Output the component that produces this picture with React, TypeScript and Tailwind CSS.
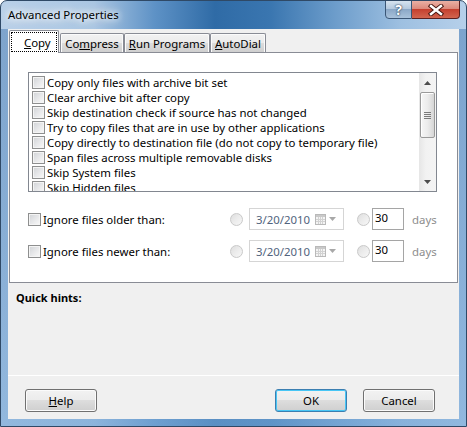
import React from "react";

const font = { fontFamily: '"Segoe UI", "Noto Sans", "Open Sans", sans-serif' };

function CheckBox() {
  return (
    <span className="w-[13px] h-[13px] shrink-0 flex border border-[#8e8f8f] bg-[#f4f4f4] p-[1px]">
      <span className="flex-1 bg-[linear-gradient(135deg,#d4d6d9_0%,#e6e7e9_50%,#f6f6f6_100%)]" />
    </span>
  );
}

function Radio() {
  return (
    <span className="block w-[13px] h-[13px] shrink-0 rounded-full border border-[#c9c9c9] bg-[linear-gradient(135deg,#dedede_0%,#ececec_50%,#f7f7f7_100%)]" />
  );
}

function Tab({ children, w }: { children: React.ReactNode; w: string }) {
  return (
    <div
      className={`${w} h-[19px] shrink-0 flex items-center justify-center border border-b-0 border-[#898c95] rounded-t-[2px] bg-[linear-gradient(180deg,#f2f2f2_0%,#ebebeb_50%,#dddddd_50%,#cfcfcf_100%)] shadow-[inset_1px_1px_0_#fbfbfb,inset_-1px_0_0_#fbfbfb] leading-[15px]`}
    >
      {children}
    </div>
  );
}

function Btn({ children, def }: { children: React.ReactNode; def?: boolean }) {
  return (
    <div
      className={`w-[72px] h-[23px] rounded-[3px] border flex items-center justify-center leading-[15px] bg-[linear-gradient(180deg,#f2f2f2_0%,#ebebeb_50%,#dddddd_50%,#cfcfcf_100%)] ${
        def
          ? "border-[#3c7fb1] shadow-[inset_0_0_0_1px_#48c6f5]"
          : "border-[#707070] shadow-[inset_0_0_0_1px_#fbfbfb]"
      }`}
    >
      {children}
    </div>
  );
}

function DateBox() {
  return (
    <div className="w-[95px] h-[22px] border border-[#d5d5d5] bg-white flex items-center pl-[6px] pr-[7px] shrink-0">
      <span className="text-[#51637d] leading-[15px]">3/20/2010</span>
      <svg width="11" height="11" viewBox="0 0 11 11" className="ml-auto">
        <rect x="0.5" y="0.5" width="10" height="10" fill="#f4f4f4" stroke="#b9b9b9" />
        <rect x="1" y="1" width="9" height="2" fill="#c9c9c9" />
        <path d="M1 5.5H10M1 7.5H10M3.5 3V10M5.5 3V10M7.5 3V10" stroke="#d2d2d2" strokeWidth="1" />
      </svg>
      <svg width="7" height="4" viewBox="0 0 7 4" className="ml-[3px]">
        <path d="M0 0H7L3.5 4Z" fill="#a8a8a8" />
      </svg>
    </div>
  );
}

function IgnoreRow({ label }: { label: string }) {
  return (
    <div className="h-[22px] flex items-center pl-[18px]">
      <div className="w-[202px] flex items-center shrink-0">
        <CheckBox />
        <span className="ml-[2px] leading-[15px]">{label}</span>
      </div>
      <Radio />
      <div className="ml-[6px]">
        <DateBox />
      </div>
      <div className="ml-[13px]">
        <Radio />
      </div>
      <div className="ml-[2px] w-[32px] h-[22px] border border-[#a5a5a5] bg-white pl-[2px] pt-[1px] leading-[15px] shrink-0">
        30
      </div>
      <span className="ml-[8px] text-[#8d8d8d] leading-[15px]">days</span>
    </div>
  );
}

const items = [
  "Copy only files with archive bit set",
  "Clear archive bit after copy",
  "Skip destination check if source has not changed",
  "Try to copy files that are in use by other applications",
  "Copy directly to destination file (do not copy to temporary file)",
  "Span files across multiple removable disks",
  "Skip System files",
  "Skip Hidden files",
];

export default function App() {
  return (
    <div
      className="w-[467px] h-[427px] flex flex-col overflow-hidden rounded-t-[7px] border border-[#2f4966] text-[11.4px] text-black bg-[linear-gradient(180deg,transparent_0px,transparent_28px,rgba(78,128,182,0.55)_28px,rgba(120,168,215,0.6)_100%),linear-gradient(90deg,#b9d0e8_0%,#aac6e2_20%,#5e92c6_33%,#2f6ba6_46%,#3a76b0_58%,#6d9dcb_72%,#9ec0e1_86%,#b6d0ea_100%)]"
      style={font}
    >
      {/* title bar */}
      <div className="h-[28px] shrink-0 flex items-start">
        <div className="pl-[7px] pt-[6px] leading-[16px] [text-shadow:0_0_6px_#fff,0_0_10px_#fff,0_0_14px_#fff]">
          Advanced Properties
        </div>
        <div className="ml-auto mr-[6px] flex h-[18px] -mt-[1px]">
          <div className="w-[27px] h-[19px] border border-[#3a5676] rounded-bl-[4px] bg-[linear-gradient(180deg,#d6e3ef_0%,#b5c9de_45%,#8ba8c7_50%,#a9c2db_100%)] flex items-center justify-center text-white font-bold text-[14px] leading-[14px] [text-shadow:0_0_2px_#1d3550,0_0_1px_#1d3550]">
            ?
          </div>
          <div className="w-[48px] h-[19px] border border-l-0 border-[#5b2020] rounded-br-[4px] bg-[linear-gradient(180deg,#eab0a4_0%,#dc8a7c_45%,#c5402f_50%,#d2654f_100%)] flex items-center justify-center">
            <svg width="16" height="12" viewBox="0 0 16 12">
              <path d="M3 2L13 10M13 2L3 10" stroke="#4b1a14" strokeWidth="4.4" strokeLinecap="square" />
              <path d="M3 2L13 10M13 2L3 10" stroke="#ffffff" strokeWidth="2.4" strokeLinecap="square" />
            </svg>
          </div>
        </div>
      </div>

      {/* client */}
      <div className="mx-[7px] h-[390px] shrink-0 bg-[#f0f0f0] flex flex-col">
        {/* tabs */}
        <div className="h-[23px] shrink-0 flex items-end pl-[1px] relative z-10">
          <div className="w-[50px] h-[23px] -mb-[1px] shrink-0 border border-b-0 border-[#898c95] rounded-t-[2px] bg-white p-[1px] flex">
            <div className="flex-1 border border-dotted border-black flex items-center pl-[12px] leading-[15px]">
              <span>
                <span className="underline">C</span>opy
              </span>
            </div>
          </div>
          <div className="ml-[1px]">
            <Tab w="w-[64px]">
              <span>
                Co<span className="underline">m</span>press
              </span>
            </Tab>
          </div>
          <Tab w="w-[86px]">
            <span>
              <span className="underline">R</span>un Programs
            </span>
          </Tab>
          <Tab w="w-[56px]">
            <span>
              <span className="underline">A</span>utoDial
            </span>
          </Tab>
        </div>

        {/* panel */}
        <div className="h-[231px] shrink-0 mx-[1px] border border-[#898c95] bg-white flex flex-col">
          <div className="mt-[19px] ml-[18px] mr-[20px] h-[120px] border border-[#828790] flex overflow-hidden">
            <div className="flex-1 pt-[2px] pl-[3px] overflow-hidden">
              {items.map((t) => (
                <div key={t} className="h-[15px] flex items-center whitespace-nowrap">
                  <CheckBox />
                  <span className="ml-[2px] leading-[15px]">{t}</span>
                </div>
              ))}
            </div>
            <div className="w-[17px] shrink-0 flex flex-col items-center bg-[linear-gradient(90deg,#e6e6e6_0%,#f2f2f2_40%,#f4f4f4_100%)]">
              <div className="h-[19px] w-full flex items-center justify-center">
                <svg width="7" height="4" viewBox="0 0 7 4">
                  <path d="M3.5 0L7 4H0Z" fill="#4d4d4d" />
                </svg>
              </div>
              <div className="w-[15px] h-[46px] rounded-[2px] border border-[#9a9a9a] bg-[linear-gradient(90deg,#f6f6f6_0%,#ececec_50%,#d6d6d6_100%)] shadow-[inset_1px_1px_0_#fff] flex flex-col items-center justify-center gap-[1px]">
                <div className="w-[7px] h-[1px] bg-[#7a7a7a]" />
                <div className="w-[7px] h-[1px] bg-[#7a7a7a]" />
                <div className="w-[7px] h-[1px] bg-[#7a7a7a]" />
                <div className="w-[7px] h-[1px] bg-[#7a7a7a]" />
              </div>
              <div className="flex-1" />
              <div className="h-[19px] w-full flex items-center justify-center">
                <svg width="7" height="4" viewBox="0 0 7 4">
                  <path d="M0 0H7L3.5 4Z" fill="#4d4d4d" />
                </svg>
              </div>
            </div>
          </div>
          <div className="mt-[16px]">
            <IgnoreRow label="Ignore files older than:" />
          </div>
          <div className="mt-[10px]">
            <IgnoreRow label="Ignore files newer than:" />
          </div>
        </div>

        {/* quick hints */}
        <div className="h-[92px] shrink-0 pl-[8px] pt-[7px] font-bold text-[11px] leading-[16px]">Quick hints:</div>
        <div className="h-[1px] shrink-0 bg-white" />

        {/* buttons */}
        <div className="h-[43px] shrink-0 flex items-start pt-[13px] pl-[17px] pr-[24px]">
          <Btn>
            <span>
              <span className="underline">H</span>elp
            </span>
          </Btn>
          <div className="ml-auto">
            <Btn def>OK</Btn>
          </div>
          <div className="ml-[16px]">
            <Btn>Cancel</Btn>
          </div>
        </div>
      </div>
      <div className="flex-1" />
    </div>
  );
}
